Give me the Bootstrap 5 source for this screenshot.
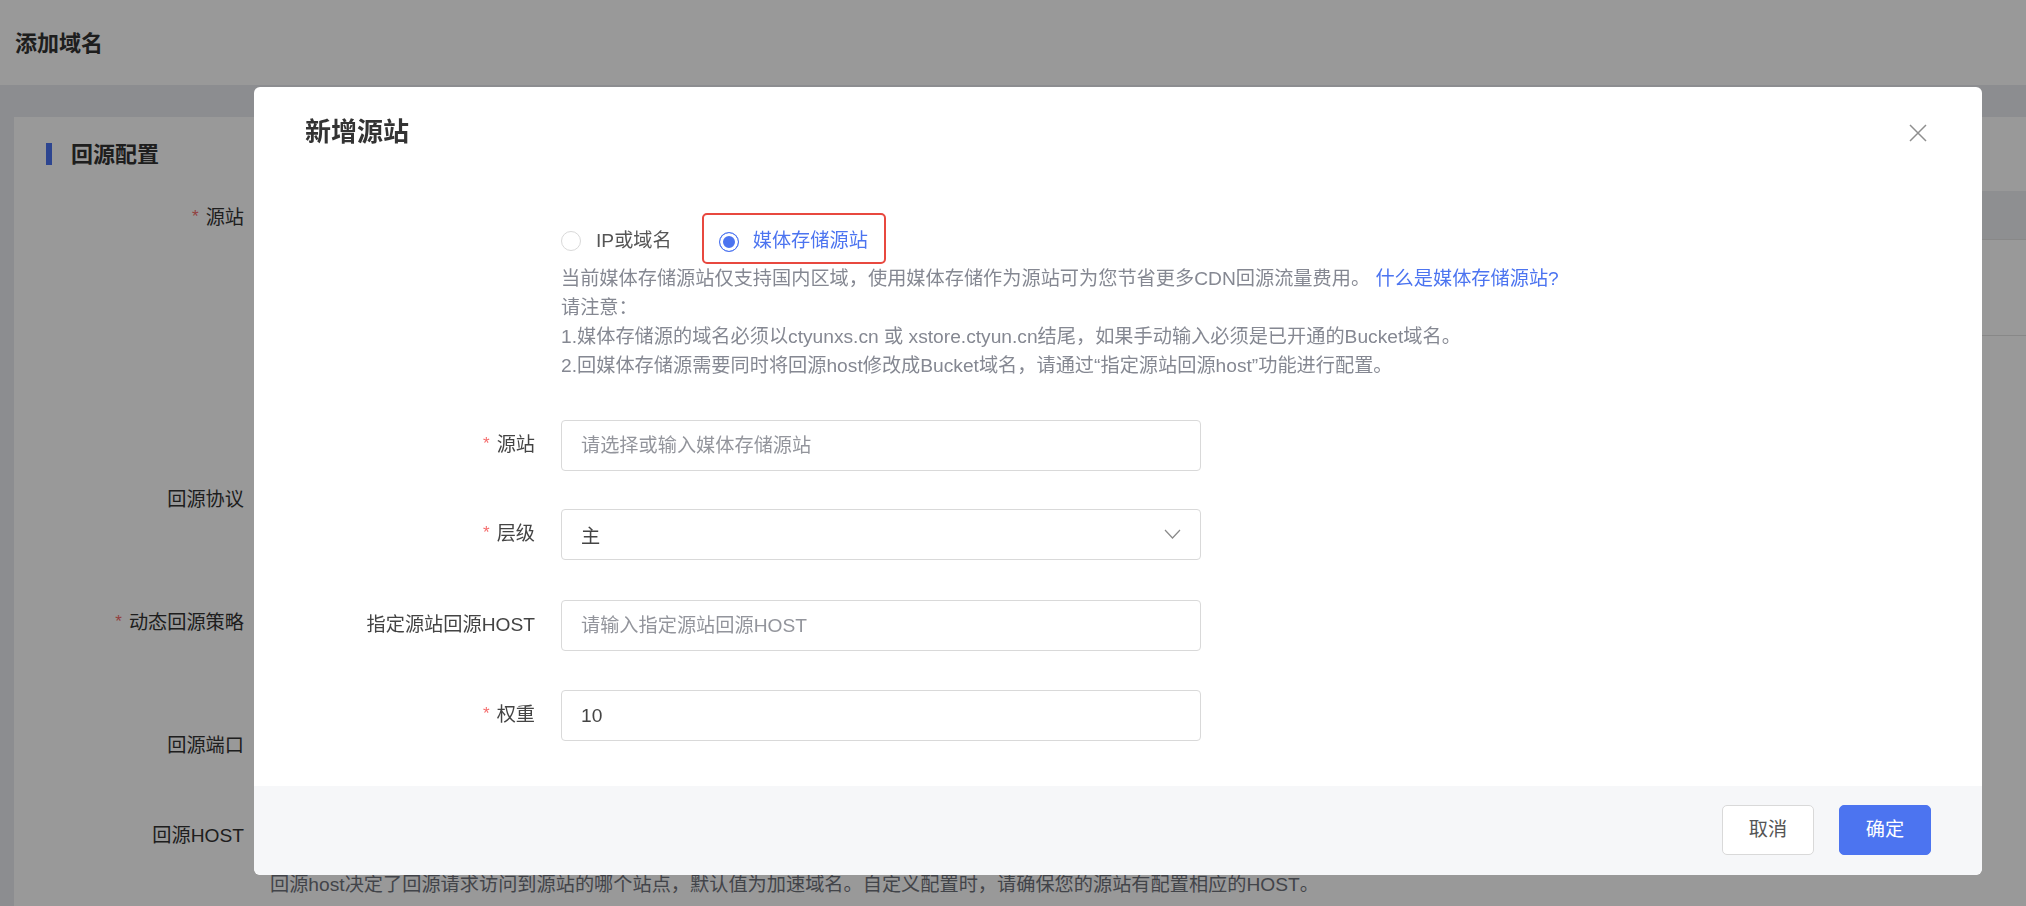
<!DOCTYPE html>
<html lang="zh-CN">
<head>
<meta charset="utf-8">
<title>添加域名</title>
<link href="https://cdn.jsdelivr.net/npm/bootstrap@5.3.0/dist/css/bootstrap.min.css" rel="stylesheet">
<style>
html,body{height:906px;overflow:hidden}
body{background:#e9ebf0;font-family:"Liberation Sans","Noto Sans CJK SC",sans-serif;font-size:19.2px;color:#444}
.top-bar{height:85px;background:#fff;padding-left:15px;padding-top:2px;font-size:22px;font-weight:700;color:#333}
.back-card{margin:32px 0 0 14px;background:#fff;height:800px}
.back-head{height:74px;padding-left:32px;gap:19px;font-size:22px;font-weight:700;color:#333}
.back-bar{width:6px;height:22px;background:#4c74f0}
.back-row{display:flex}
.back-label{width:230px;flex:none;text-align:right;line-height:50px;color:#333}
.back-label-first{line-height:54px}
.back-side{flex:1;margin-left:26px;min-width:0}
.r1{height:284px}.r2{height:123px}.r3{height:123px}.r4{height:90px}.r5{height:60px}
.back-band{height:49px;background:#edeff2;border-bottom:1px solid #e3e3e3}
.back-cell{height:96px;border-bottom:1px solid #e3e3e3}
.back-help{margin-left:256px;color:#6f727b;line-height:28px;white-space:nowrap}
.req{color:#f56c6c;font-size:17px;margin-right:7px;position:relative;top:-2px}
.modal-backdrop{--bs-backdrop-opacity:.4}
.src-dialog{width:1728px;max-width:none;margin:87px 0 0 254px}
.src-dialog .modal-content{border:0;border-radius:6px;overflow:hidden}
.src-head{height:88px;padding:0 55px 0 51px;border:0}
.src-title{font-size:26px;font-weight:700;line-height:1.2;margin:0;padding-top:3px;color:#333}
.src-close{line-height:0;margin-top:4px}
.src-body{padding:38px 0 45px 0}
.radio-row{height:51px;padding-left:307px}
.radio-item{display:flex;align-items:center;padding-top:6px}
.radio-ring{width:20px;height:20px;margin:0;border:1px solid #d9d9d9;flex:none;background-color:#fff}
.radio-ring:checked{background-color:#4c74f0;background-image:none;border-color:#4c74f0;box-shadow:inset 0 0 0 3px #fff}
.radio-text{margin-left:15px;color:#555}
.radio-box{margin-left:30px;height:51px;padding:6px 16px 0 15px;border:2px solid #e8483f;border-radius:5px}
.radio-box .radio-text{margin-left:14px;color:#4c74f0}
.tip{line-height:29px;color:#858892;margin:0 0 40px 307px;white-space:nowrap}
.tip a{color:#4c74f0;text-decoration:none}
.fld-row{display:flex;align-items:center}
.fld-label{width:307px;flex:none;text-align:right;padding-right:26px;color:#444;white-space:nowrap}
.fld-box{width:640px;position:relative}
.fld-input{height:51px;padding:0 19px;font-size:19.2px;color:#444;border:1px solid #d9d9d9;border-radius:4px;font-family:inherit}
.fld-input::placeholder{color:#93959c;opacity:1}
.fld-chev{position:absolute;right:20px;top:20px}
.gap-a{margin-bottom:38px}.gap-b{margin-bottom:40px}.gap-c{margin-bottom:39px}
.src-foot{height:89px;background:#f6f7f9;border:0;padding:0 51px 1px 0;gap:25px}
.src-btn{width:92px;height:50px;margin:0!important;padding:0;font-size:19.2px;border-radius:5px}
.btn-cancel{background:#fff;border:1px solid #d9d9d9;color:#555}
.btn-ok{background:#4c74f0;border:1px solid #4c74f0;color:#fff}
</style>
</head>
<body>
<div class="top-bar d-flex align-items-center">添加域名</div>
<div class="back-card">
  <div class="back-head d-flex align-items-center"><span class="back-bar"></span><span>回源配置</span></div>
  <div class="back-row r1">
    <div class="back-label back-label-first"><span class="req">*</span>源站</div>
    <div class="back-side"><div class="back-band"></div><div class="back-cell"></div></div>
  </div>
  <div class="back-row r2"><div class="back-label">回源协议</div></div>
  <div class="back-row r3"><div class="back-label"><span class="req">*</span>动态回源策略</div></div>
  <div class="back-row r4"><div class="back-label">回源端口</div></div>
  <div class="back-row r5"><div class="back-label">回源HOST</div></div>
  <div class="back-help">回源host决定了回源请求访问到源站的哪个站点，默认值为加速域名。自定义配置时，请确保您的源站有配置相应的HOST。</div>
</div>

<div class="modal-backdrop show"></div>
<div class="modal d-block" tabindex="-1">
  <div class="modal-dialog src-dialog">
    <div class="modal-content">
      <div class="modal-header src-head d-flex justify-content-between align-items-center">
        <h5 class="src-title">新增源站</h5>
        <button type="button" class="btn p-0 border-0 src-close" aria-label="关闭">
          <svg width="18" height="18" viewBox="0 0 18 18" fill="none" stroke="#8f8f8f" stroke-width="1.5"><path d="M1 1 17 17M17 1 1 17"/></svg>
        </button>
      </div>
      <div class="modal-body src-body">
        <div class="radio-row d-flex align-items-center">
          <label class="radio-item"><input class="form-check-input radio-ring" type="radio" name="kind"><span class="radio-text">IP或域名</span></label>
          <label class="radio-item radio-box"><input class="form-check-input radio-ring" type="radio" name="kind" checked><span class="radio-text">媒体存储源站</span></label>
        </div>
        <p class="tip">当前媒体存储源站仅支持国内区域，使用媒体存储作为源站可为您节省更多CDN回源流量费用。 <a href="#">什么是媒体存储源站?</a><br>请注意：<br>1.媒体存储源的域名必须以ctyunxs.cn 或 xstore.ctyun.cn结尾，如果手动输入必须是已开通的Bucket域名。<br>2.回媒体存储源需要同时将回源host修改成Bucket域名，请通过“指定源站回源host”功能进行配置。</p>
        <div class="fld-row gap-a">
          <div class="fld-label"><span class="req">*</span>源站</div>
          <div class="fld-box"><input class="form-control fld-input" placeholder="请选择或输入媒体存储源站"></div>
        </div>
        <div class="fld-row gap-b">
          <div class="fld-label"><span class="req">*</span>层级</div>
          <div class="fld-box"><input class="form-control fld-input" value="主" readonly>
            <svg class="fld-chev" width="17" height="10" viewBox="0 0 17 10" fill="none" stroke="#8a8a8a" stroke-width="1.2"><path d="M1 1 8.5 9 16 1"/></svg>
          </div>
        </div>
        <div class="fld-row gap-c">
          <div class="fld-label">指定源站回源HOST</div>
          <div class="fld-box"><input class="form-control fld-input" placeholder="请输入指定源站回源HOST"></div>
        </div>
        <div class="fld-row">
          <div class="fld-label"><span class="req">*</span>权重</div>
          <div class="fld-box"><input class="form-control fld-input" value="10"></div>
        </div>
      </div>
      <div class="modal-footer src-foot">
        <button type="button" class="btn src-btn btn-cancel">取消</button>
        <button type="button" class="btn src-btn btn-ok">确定</button>
      </div>
    </div>
  </div>
</div>
<script src="https://cdn.jsdelivr.net/npm/bootstrap@5.3.0/dist/js/bootstrap.bundle.min.js"></script>
</body>
</html>
